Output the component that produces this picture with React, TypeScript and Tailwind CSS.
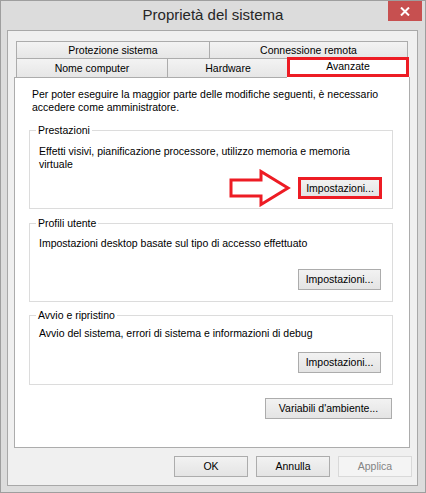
import type { ReactNode } from 'react'

function Tab({ label, className = '' }: { label: string; className?: string }) {
  return (
    <div
      className={`flex justify-center border border-b-0 border-[#acacac] bg-linear-to-b from-[#f3f3f3] to-[#e6e6e6] ${className}`}
    >
      {label}
    </div>
  )
}

function Btn({
  children,
  className = '',
  disabled = false,
}: {
  children: ReactNode
  className?: string
  disabled?: boolean
}) {
  return (
    <button
      disabled={disabled}
      className={`flex items-center justify-center border h-[21px] ${
        disabled
          ? 'border-[#d9d9d9] bg-[#f4f4f4] text-[#838383]'
          : 'border-[#acacac] bg-linear-to-b from-[#f2f2f2] to-[#e4e4e4] text-black'
      } ${className}`}
    >
      {children}
    </button>
  )
}

function Arrow() {
  return (
    <svg width="63" height="38" viewBox="0 0 63 38" className="-mt-[2px] mr-[6px] shrink-0">
      <polygon
        points="2,11 32,11 32,2.5 59,19 32,35.5 32,27 2,27"
        fill="white"
        stroke="#ed1c24"
        strokeWidth="3"
        strokeLinejoin="miter"
      />
    </svg>
  )
}

export default function App() {
  return (
    <div className="w-[426px] h-[493px] border border-[#9e9e9e] bg-[#dcdcdc] flex flex-col font-['Liberation_Sans',Arial,sans-serif] text-[10.5px] leading-[13px] text-black">
      {/* barra del titolo */}
      <div className="h-[29px] shrink-0 grid grid-cols-[1fr_auto_1fr]">
        <div />
        <div className="pt-[5px] text-[15px] leading-[18px] text-[#262626]">Proprietà del sistema</div>
        <div className="flex justify-end items-start pr-[3px]">
          <button className="w-[34px] h-[20px] bg-[#c75050] flex items-center justify-center">
            <svg width="10" height="9" viewBox="0 0 10 9">
              <path d="M1 0.5 L9 8.5 M9 0.5 L1 8.5" stroke="white" strokeWidth="2" />
            </svg>
          </button>
        </div>
      </div>

      <div className="ml-[6px] mr-[7px] mb-[6px] flex-1 border border-[#a8a8a8] bg-[#f0f0f0] flex flex-col pt-[10px]">
        {/* schede */}
        <div className="ml-[8px] flex flex-col">
          <div className="flex h-[17px]">
            <Tab label="Protezione sistema" className="w-[194px] pt-[2px]" />
            <Tab label="Connessione remota" className="w-[199px] -ml-px pt-[2px]" />
          </div>
          <div className="flex h-[19px] items-end">
            <Tab label="Nome computer" className="w-[152px] h-full pt-[3px]" />
            <Tab label="Hardware" className="w-[122px] h-full -ml-px pt-[3px]" />
            <div className="relative z-10 -ml-[2px] -mb-px w-[122px] h-[21px] bg-white pb-px">
              <div className="h-full border-[3px] border-[#ed1c24] text-center">Avanzate</div>
            </div>
          </div>
        </div>

        <div className="ml-[6px] w-[396px] h-[371px] shrink-0 border border-[#acacac] bg-white flex flex-col">
          <p className="ml-[17px] mt-[10px] whitespace-nowrap">
            Per poter eseguire la maggior parte delle modifiche seguenti, è necessario
            <br />
            accedere come amministratore.
          </p>

          <fieldset className="ml-[14px] w-[364px] mt-[10px] border border-[#dcdcdc]">
            <legend className="ml-[6px] px-[2px]">Prestazioni</legend>
            <div className="pl-[9px] pr-[11px] pt-[8px] pb-px">
              <p className="whitespace-nowrap">
                Effetti visivi, pianificazione processore, utilizzo memoria e memoria
                <br />
                virtuale
              </p>
              <div className="flex justify-end items-start">
                <Arrow />
                <button className="mt-[6px] -mr-px w-[84px] h-[22px] border-[3px] border-[#ed1c24] bg-linear-to-b from-[#f2f2f2] to-[#e4e4e4] flex items-center justify-center">
                  Impostazioni...
                </button>
              </div>
            </div>
          </fieldset>

          <fieldset className="ml-[14px] w-[364px] mt-[8px] border border-[#dcdcdc]">
            <legend className="ml-[6px] px-[2px]">Profili utente</legend>
            <div className="pl-[9px] pr-[11px] pt-[7px] pb-[11px] flex flex-col">
              <p className="whitespace-nowrap">Impostazioni desktop basate sul tipo di accesso effettuato</p>
              <Btn className="self-end mt-[19px] w-[83px]">Impostazioni...</Btn>
            </div>
          </fieldset>

          <fieldset className="ml-[14px] w-[364px] mt-[7px] border border-[#dcdcdc]">
            <legend className="ml-[6px] px-[2px]">Avvio e ripristino</legend>
            <div className="pl-[9px] pr-[11px] pt-[5px] pb-[11px] flex flex-col">
              <p className="whitespace-nowrap">Avvio del sistema, errori di sistema e informazioni di debug</p>
              <Btn className="self-end mt-[12px] w-[83px]">Impostazioni...</Btn>
            </div>
          </fieldset>

          <Btn className="self-end mt-[13px] mr-[17px] w-[127px]">Variabili d'ambiente...</Btn>
        </div>

        <div className="mt-[8px] flex justify-end gap-[8px] pr-[5px]">
          <Btn className="w-[74px]">OK</Btn>
          <Btn className="w-[74px]">Annulla</Btn>
          <Btn className="w-[74px]" disabled>
            Applica
          </Btn>
        </div>
      </div>
    </div>
  )
}
